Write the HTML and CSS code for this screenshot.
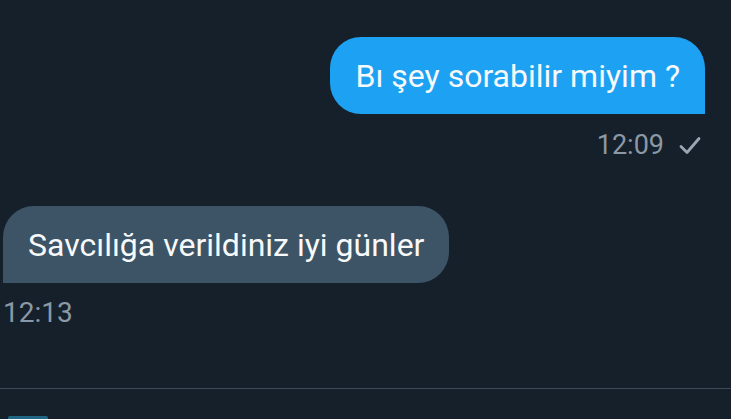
FILE: index.html
```html
<!DOCTYPE html>
<html lang="tr">
<head>
<meta charset="utf-8">
<title>Mesajlar</title>
<link rel="stylesheet" href="styles.css">
</head>
<body>
<div class="screen">
  <div class="thread">
    <div class="row row-out">
      <div class="bubble bubble-out">Bı şey sorabilir miyim ?</div>
    </div>
    <div class="meta meta-out">
      <span class="time">12:09</span>
      <svg class="check" width="22" height="20" viewBox="0 0 22 20" aria-hidden="true">
        <path d="M2 10.5 L8 16.5 L20 2.5" fill="none" stroke="#9aa6b2" stroke-width="2.8" stroke-linecap="round" stroke-linejoin="round"/>
      </svg>
    </div>
    <div class="row row-in">
      <div class="bubble bubble-in">Savcılığa verildiniz iyi günler</div>
    </div>
    <div class="meta meta-in">
      <span class="time time-in">12:13</span>
    </div>
  </div>
  <div class="divider"></div>
  <div class="compose">
    <div class="compose-btn"></div>
  </div>
</div>
</body>
</html>
```
FILE: styles.css
```css
html, body {
  margin: 0;
  padding: 0;
  background: #15202b;
}
.screen {
  width: 731px;
  height: 419px;
  display: flex;
  flex-direction: column;
  overflow: hidden;
  background: #15202b;
  font-family: Roboto, "Noto Sans", sans-serif;
}
.thread {
  height: 388px;
  flex: none;
  padding: 37px 26px 0 3px;
  box-sizing: border-box;
  display: flex;
  flex-direction: column;
}
.row {
  display: flex;
}
.row-out {
  justify-content: flex-end;
}
.row-in {
  justify-content: flex-start;
  margin-top: 45px;
}
.bubble {
  font-size: 32px;
  line-height: 37px;
  padding: 21px 25px 19px 25px;
  color: #f7f9fa;
  white-space: nowrap;
}
.bubble-out {
  background: #1da1f2;
  border-radius: 31px 31px 0 31px;
}
.bubble-in {
  background: #3d5466;
  border-radius: 31px 31px 31px 0;
}
.meta {
  display: flex;
  align-items: center;
  margin-top: 15px;
  height: 32px;
}
.meta-out {
  justify-content: flex-end;
  gap: 15px;
  padding-right: 4px;
}
.meta-in {
  margin-top: 14px;
  padding-left: 0;
}
.time {
  font-size: 27px;
  line-height: 32px;
  color: #8b98a5;
}
.time-in {
  font-size: 28px;
}
.check {
  display: block;
  margin-top: 2px;
}
.divider {
  height: 1px;
  background: #3d4b58;
  flex: none;
}
.compose {
  flex: 1;
  display: flex;
  align-items: flex-end;
  padding-left: 8px;
}
.compose-btn {
  width: 40px;
  height: 3px;
  background: #1f6784;
  border-radius: 2px 2px 0 0;
}
```
